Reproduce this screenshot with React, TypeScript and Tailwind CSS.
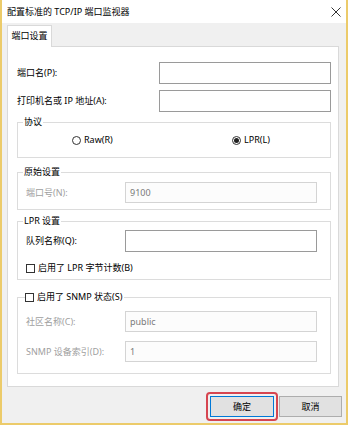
import React from "react";

// Windows 10 style "Configure Standard TCP/IP Port Monitor" dialog, shrunk to ~75%.

function TextBox({
  width,
  height,
  value,
  disabled,
}: {
  width: string;
  height: string;
  value?: string;
  disabled?: boolean;
}) {
  return (
    <div
      className={`${width} ${height} flex items-center pl-[4px] border ${
        disabled ? "border-[#d4d4d4] bg-[#fcfcfc] text-[#7a7a7a]" : "border-[#9a9a9a] bg-white text-black"
      }`}
    >
      {value}
    </div>
  );
}

function Radio({ checked, label }: { checked?: boolean; label: string }) {
  return (
    <div className="flex items-center gap-[3px]">
      <span className="flex h-[9px] w-[9px] items-center justify-center rounded-full border border-[#333] bg-white">
        {checked ? <span className="h-[5px] w-[5px] rounded-full bg-[#222]" /> : null}
      </span>
      <span>{label}</span>
    </div>
  );
}

function CheckBox({ label }: { label: string }) {
  return (
    <div className="flex items-center gap-[3px]">
      <span className="h-[9px] w-[9px] border border-[#333] bg-white" />
      <span>{label}</span>
    </div>
  );
}

export default function App() {
  return (
    <div className="flex h-[425px] w-[348px] flex-col border-x-2 border-b-2 border-[#eccb6a] bg-[#f0f0f0] font-['Noto_Sans','Noto_Sans_CJK_SC',sans-serif] text-[9px] leading-[16px] text-black">
      {/* title bar */}
      <div className="flex h-[23px] items-center justify-between bg-white pl-[5px] pr-[5px]">
        <span>配置标准的 TCP/IP 端口监视器</span>
        <svg width="10" height="10" viewBox="0 0 10 10" className="text-[#333]">
          <path d="M0.5 0.5 L9.5 9.5 M9.5 0.5 L0.5 9.5" stroke="currentColor" strokeWidth="1" />
        </svg>
      </div>

      {/* tab strip */}
      <div className="flex pl-[5px] pt-[2px]">
        <div className="relative -mb-px flex h-[22px] w-[45px] items-center justify-center border border-b-0 border-[#d9d9d9] bg-white pb-[1px]">
          端口设置
        </div>
      </div>

      {/* tab page */}
      <div className="ml-[5px] flex h-[341px] w-[332px] flex-col border border-[#d9d9d9] bg-white pt-[15px]">
        <div className="flex h-[22px] items-center">
          <span className="w-[151px] pl-[9px]">端口名(P):</span>
          <TextBox width="w-[172px]" height="h-[22px]" />
        </div>
        <div className="mt-[6px] flex h-[22px] items-center">
          <span className="w-[151px] pl-[9px]">打印机名或 IP 地址(A):</span>
          <TextBox width="w-[172px]" height="h-[22px]" />
        </div>

        <fieldset className="ml-[9px] mt-[2px] w-[314px] border border-[#dcdcdc] pb-[9px]">
          <legend className="ml-[5px] px-[1px] leading-[16px]">协议</legend>
          <div className="mt-[2px] flex h-[16px] items-center">
            <div className="ml-[54px] w-[160px]">
              <Radio label="Raw(R)" />
            </div>
            <Radio checked label="LPR(L)" />
          </div>
        </fieldset>

        <fieldset className="ml-[9px] mt-[6px] w-[314px] border border-[#dcdcdc] pb-[6px]">
          <legend className="ml-[5px] px-[1px] leading-[16px]">原始设置</legend>
          <div className="mt-[2px] flex h-[21px] items-center">
            <span className="w-[107px] pl-[8px] text-[#a0a0a0]">端口号(N):</span>
            <TextBox width="w-[192px]" height="h-[21px]" value="9100" disabled />
          </div>
        </fieldset>

        <fieldset className="ml-[9px] mt-[3px] w-[314px] border border-[#dcdcdc] pb-[3px]">
          <legend className="ml-[5px] px-[1px] leading-[16px]">LPR 设置</legend>
          <div className="mt-[1px] flex h-[22px] items-center">
            <span className="w-[107px] pl-[8px]">队列名称(Q):</span>
            <TextBox width="w-[192px]" height="h-[22px]" />
          </div>
          <div className="mt-[8px] flex h-[16px] items-center pl-[8px]">
            <CheckBox label="启用了 LPR 字节计数(B)" />
          </div>
        </fieldset>

        <fieldset className="ml-[9px] mt-[9px] w-[314px] border border-[#dcdcdc] pb-[11px]">
          <legend className="ml-[7px] pr-[2px] leading-[16px]">
            <CheckBox label="启用了 SNMP 状态(S)" />
          </legend>
          <div className="mt-[6px] flex h-[21px] items-center">
            <span className="w-[107px] pl-[8px] text-[#a0a0a0]">社区名称(C):</span>
            <TextBox width="w-[192px]" height="h-[21px]" value="public" disabled />
          </div>
          <div className="mt-[9px] flex h-[21px] items-center">
            <span className="w-[107px] pl-[8px] text-[#a0a0a0]">SNMP 设备索引(D):</span>
            <TextBox width="w-[192px]" height="h-[21px]" value="1" disabled />
          </div>
        </fieldset>
      </div>

      {/* buttons */}
      <div className="mt-[5px] flex items-center justify-end pr-[4px]">
        <div className="rounded-[4px] border-2 border-[#d64550] p-[2px]">
          <div className="flex h-[21px] w-[64px] items-center justify-center border-[1.5px] border-[#0078d7] bg-[#e1e1e1]">
            确定
          </div>
        </div>
        <div className="ml-[1px] flex h-[21px] w-[63px] items-center justify-center border border-[#adadad] bg-[#e1e1e1]">
          取消
        </div>
      </div>
    </div>
  );
}
